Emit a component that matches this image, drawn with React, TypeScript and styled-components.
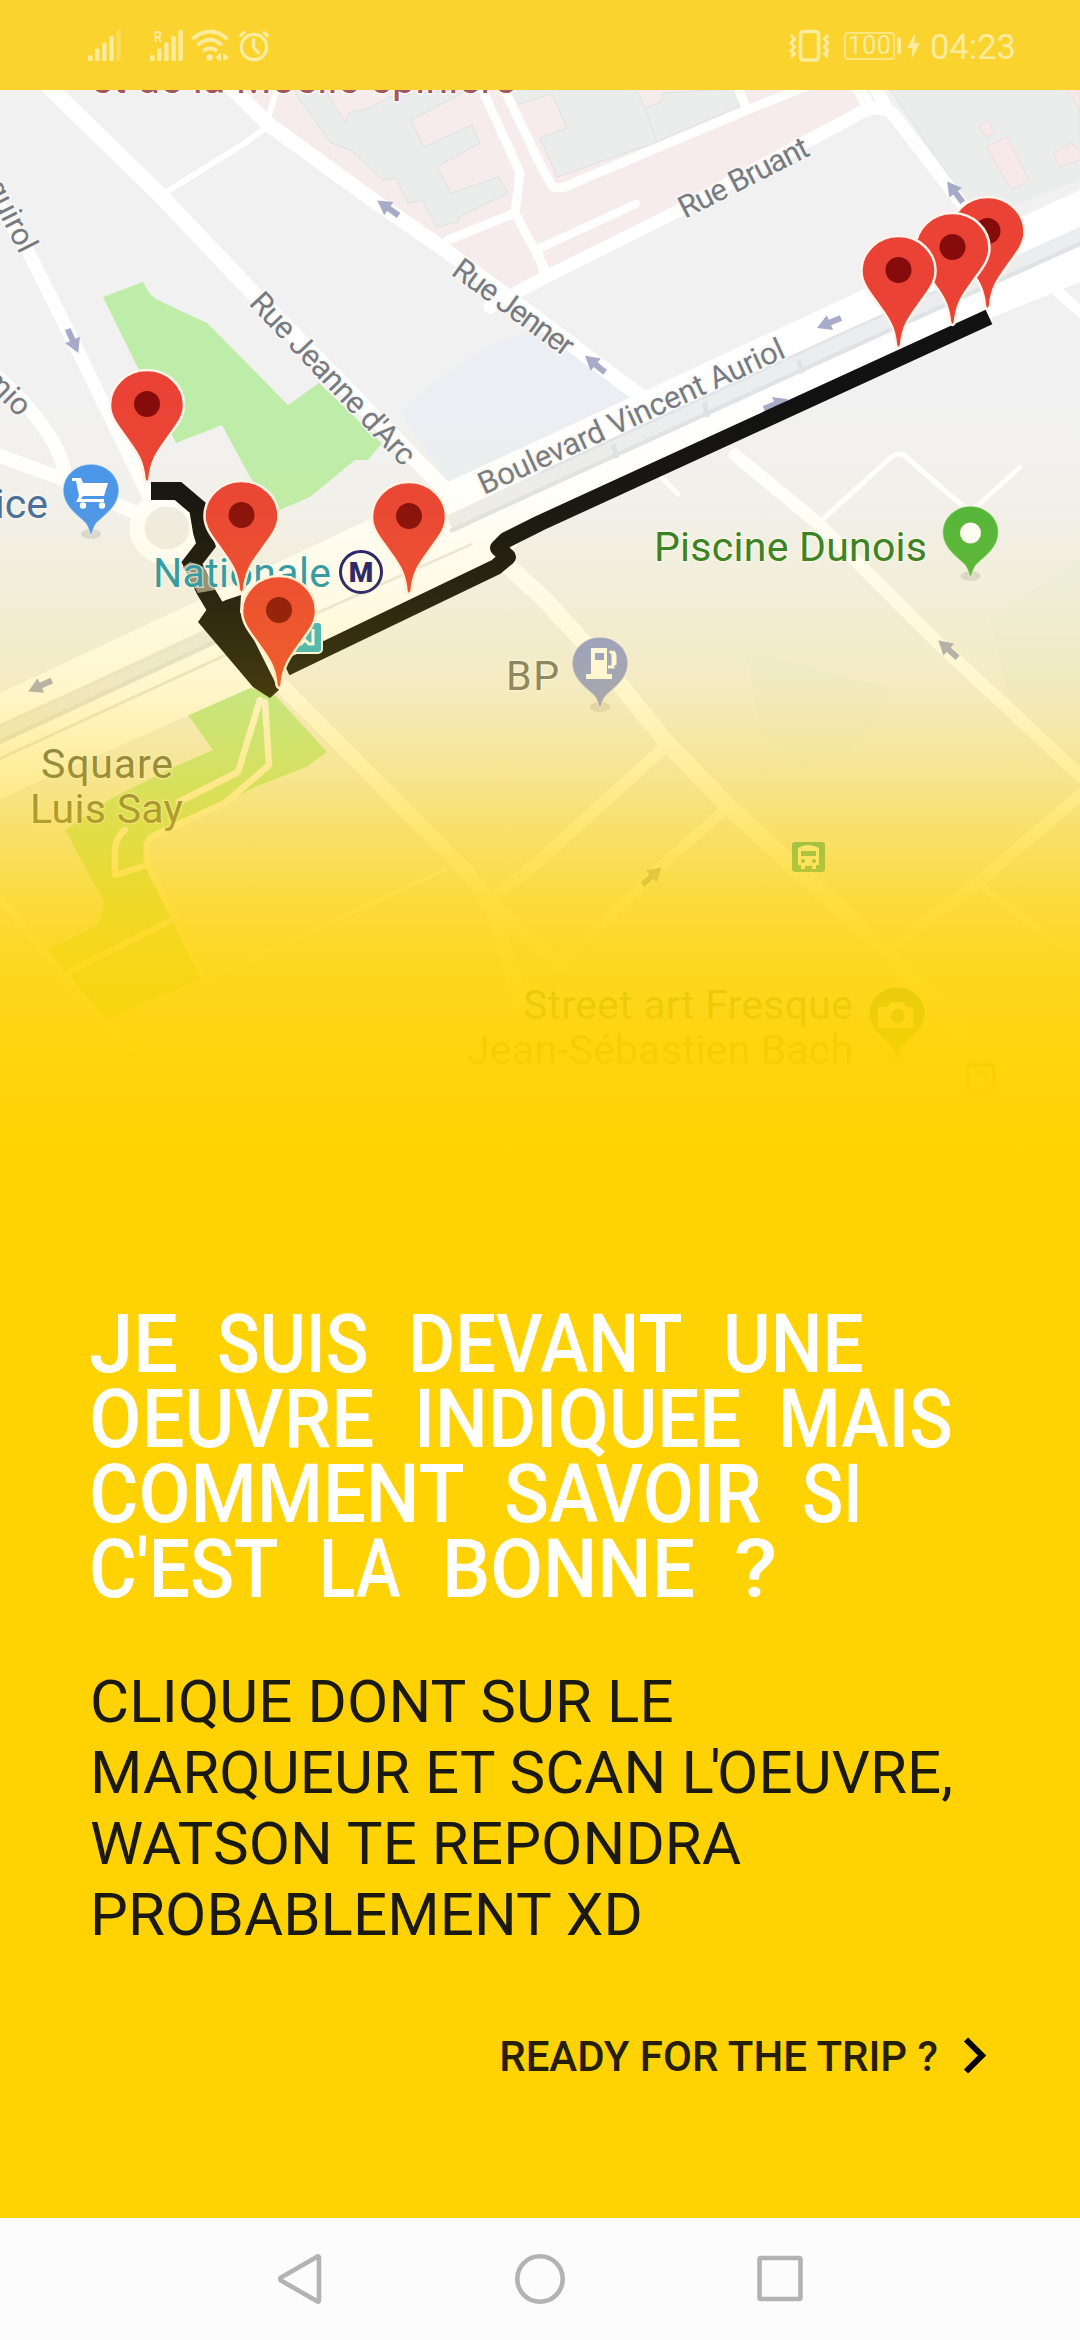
import React from 'react';
import styled, { createGlobalStyle } from 'styled-components';

const GlobalStyle = createGlobalStyle`
  * { box-sizing: border-box; }
  body { margin: 0; background: #ffd303; }
`;

const Page = styled.main`
  width: 1080px;
  height: 2340px;
  display: flex;
  flex-direction: column;
  overflow: hidden;
  background: #ffd303;
  font-family: Roboto, 'Liberation Sans', sans-serif;
`;

const StatusBar = styled.header`
  flex: none;
  height: 90px;
  padding: 1px 66px 0 88px;
  display: flex;
  align-items: center;
  justify-content: space-between;
  background: #fad32f;
  color: #fdeb9e;
`;

const StatusGroup = styled.div`
  display: flex;
  align-items: center;
`;

const StatusIcon = styled.svg<{ $gap?: number }>`
  display: block;
  flex: none;
  margin-right: ${(p) => p.$gap ?? 0}px;
`;

const Battery = styled.div`
  width: 51px;
  height: 28px;
  border: 2px solid #fde680;
  border-radius: 4px;
  display: flex;
  align-items: center;
  justify-content: center;
  font-size: 25px;
  line-height: 24px;
  letter-spacing: 0.4px;
`;

const BatteryNub = styled.div`
  width: 4px;
  height: 17px;
  margin: 0 6px 0 2px;
  border-radius: 2px;
  background: #fdeb9e;
`;

const Clock = styled.span`
  width: 84px;
  padding-top: 2px;
  font-size: 34.5px;
  line-height: 40px;
  white-space: nowrap;
`;

const MapArt = styled.svg`
  flex: none;
  display: block;
  width: 1080px;
  height: 1110px;
  font-family: Roboto, 'Liberation Sans', sans-serif;
`;

const Content = styled.section`
  flex: 1;
  min-height: 0;
  padding: 107px 0 0 89px;
  display: flex;
  flex-direction: column;
`;

const Heading = styled.h1`
  margin: 0;
  font-size: 81px;
  line-height: 75px;
  font-weight: 500;
  color: #fff;
`;

const HeadingLine = styled.span`
  display: flex;
`;

const Word = styled.span<{ $slot: number; $scale: number }>`
  flex: none;
  width: ${(p) => p.$slot}px;
  white-space: nowrap;
  transform: scaleX(${(p) => p.$scale});
  transform-origin: 0 50%;
`;

const Description = styled.p`
  margin: 59px 0 0 1px;
  font-size: 60px;
  line-height: 71px;
  letter-spacing: 0.1px;
  color: #1b1a12;
  white-space: nowrap;
`;

const Elision = styled.span`
  letter-spacing: -3.6px;
`;

const StartButton = styled.button`
  align-self: flex-end;
  margin: 79px 93px 0 0;
  padding: 0;
  height: 56px;
  border: 0;
  background: none;
  display: flex;
  align-items: center;
  gap: 24px;
  font: 500 42px/56px Roboto, 'Liberation Sans', sans-serif;
  color: #261f06;
  white-space: nowrap;
`;

const Chevron = styled.svg`
  display: block;
  margin-bottom: 2px;
`;

const NavBar = styled.nav`
  flex: none;
  height: 122px;
  padding: 0 276px;
  display: flex;
  align-items: center;
  justify-content: space-between;
  background: #fcfcfc;
`;

const NavIcon = styled.svg`
  display: block;
  width: 50px;
  height: 54px;
  overflow: visible;
  fill: none;
  stroke: #b3b3b3;
  stroke-width: 4.6;
  stroke-linejoin: round;
`;

const Roads = styled.g`
  fill: none;
  stroke: #fff;
  stroke-linejoin: round;
  stroke-linecap: round;
`;

const StreetName = styled.text`
  font-size: 31px;
  fill: #777b80;
  stroke: #f7f7f7;
  stroke-width: 3px;
  paint-order: stroke;
`;

const PlaceName = styled.text`
  font-size: 41px;
  stroke: rgba(255, 255, 255, 0.6);
  stroke-width: 3px;
  paint-order: stroke;
`;

type Pt = { x: number; y: number };

const Marker = ({ x, y }: Pt) => (
  <g transform={`translate(${x} ${y})`}>
    <path
      d="M-2.5 75 C-4 55 -12 46 -22 32 C-31 20 -37 12 -37 1 A37 35 0 0 1 37 1 C37 12 31 20 22 32 C12 46 4 55 2.5 75 Q0 81 -2.5 75Z"
      fill="#ea4335"
      stroke="#fff3ea"
      strokeWidth="2.5"
    />
    <circle r="13" fill="#860c0c" />
  </g>
);

const Place = ({ x, y, color, children }: Pt & { color: string; children?: React.ReactNode }) => (
  <g transform={`translate(${x} ${y})`}>
    <ellipse cx="0" cy="43" rx="10" ry="5" fill="#000" opacity=".1" />
    <path
      d="M0 45 C-3 39 -2 34 -9 29 C-18 21 -28 13 -28 -1 A28 26 0 0 1 28 -1 C28 13 18 21 9 29 C2 34 3 39 0 45Z"
      fill={color}
      stroke="#fff"
      strokeOpacity=".5"
      strokeWidth="1.5"
    />
    {children}
  </g>
);

const arrows = [
  [388, 208, 215], [73, 341, 66], [955, 192, 233], [829, 323, 157], [595, 364, 220],
  [776, 404, -22], [948, 649, 222], [40, 686, 155], [652, 876, -42],
];

const markers: Pt[] = [
  { x: 987.5, y: 231 }, { x: 952.5, y: 247 }, { x: 898.5, y: 270 },
  { x: 147, y: 404 }, { x: 241.5, y: 515 }, { x: 409, y: 516 }, { x: 279, y: 610 },
];

const CityMap = () => (
  <MapArt viewBox="0 90 1080 1110">
    <defs>
      <linearGradient id="fade" gradientUnits="userSpaceOnUse" x1="0" y1="400" x2="0" y2="1150">
        <stop offset="0" stopColor="#ffd303" stopOpacity="0" />
        <stop offset=".13" stopColor="#ffd303" stopOpacity=".03" />
        <stop offset=".25" stopColor="#ffd303" stopOpacity=".1" />
        <stop offset=".38" stopColor="#ffd303" stopOpacity=".2" />
        <stop offset=".48" stopColor="#ffd303" stopOpacity=".37" />
        <stop offset=".587" stopColor="#ffd303" stopOpacity=".59" />
        <stop offset=".667" stopColor="#ffd303" stopOpacity=".76" />
        <stop offset=".75" stopColor="#ffd303" stopOpacity=".87" />
        <stop offset=".84" stopColor="#ffd303" stopOpacity=".935" />
        <stop offset=".92" stopColor="#ffd303" stopOpacity=".98" />
        <stop offset="1" stopColor="#ffd303" />
      </linearGradient>
    </defs>
    <rect y="90" width="1080" height="1110" fill="#f1f1f1" />

    {/* hospital grounds and buildings */}
    <path d="M235 90 L450 247 L500 298 L540 272 L862 116 L875 100 L868 90Z" fill="#f7ecec" />
    <g fill="#ebecec" stroke="#dfe0e0" strokeWidth="1">
      <path d="M298 97 L331 143 L351 150 L382 180 L396 178 L408 203 L422 200 L437 227 L458 222 L459 217 L508 193 L499 177 L451 193 L437 167 L480 143 L472 125 L424 147 L411 120 L455 97 L470 88 L389 97 L370 108 L350 112 L345 122 L324 88 L294 88Z" />
      <path d="M567 128 L540 138 L557 177 L654 143 L747 103 L741 88 L664 93 L660 103 L645 108 L636 88 L510 88 L515 105 L552 94Z" />
      <path d="M645 108 L656 140" fill="none" />
      <path d="M889 88 L962 195 L1080 150 L1080 88Z" />
      <path d="M960 195 L970 222 L1080 180 L1080 140Z" stroke="none" />
    </g>
    <g fill="#f7e9e9" stroke="#e9dcdc" strokeWidth="1">
      <path d="M979 127 L988 120 L995 133 L986 137Z" />
      <path d="M986 147 L1007 137 L1029 180 L1012 190Z" />
      <path d="M1053 153 L1071 143 L1082 152 V159 L1060 167Z" />
      <path d="M1067 88 L1080 112 V88Z" />
    </g>
    <path d="M400 413 L430 385 L489 345 L540 330 L640 400 L640 403 L448 482Z" fill="#ebeff4" />
    <path d="M745 650 L895 690 L850 750 L800 765 L760 725Z" fill="#e9f0f0" opacity=".4" />
    <path d="M990 620 L1080 560 V700 H1010Z" fill="#e9f0ec" opacity=".5" />

    {/* parks */}
    <path d="M103 297 L143 282 Q150 298 162 302 L207 323 L224 340 L288 405 L319 383 L382 443 L368 460 L355 460 L310 497 L275 512 L250 477 L222 425 L176 443 L138 368Z" fill="#beedaa" />
    <path d="M250 688 L188 715 L213 750 L172 768 L114 797 L65 830 L105 903 L98 925 L48 950 L107 1020 L203 977 L172 917 L148 865 L143 843 L179 823 L224 803 L255 787 L306 767 L327 752 L275 695Z" fill="#b9eaa0" />

    {/* streets */}
    <Roads>
      <path d="M40 78 L160 195 L253 293 L455 500" strokeWidth="16" />
      <path d="M222 78 L268 124 L370 198 L445 250 L643 398" strokeWidth="15" />
      <path d="M268 126 L245 143 L160 196 M278 85 L268 118" strokeWidth="6" />
      <path d="M-10 190 L30 255 L75 345 L148 495" strokeWidth="13" />
      <path d="M-5 375 C30 405 62 445 65 475 M-5 454 L60 478 L140 515" strokeWidth="14" />
      <ellipse cx="167" cy="528" rx="30" ry="29" strokeWidth="15" fill="#efeee9" />
      <path d="M190 555 L215 600" strokeWidth="14" />
      <path d="M478 80 L520 173 L515 213 L448 240 M515 213 L541 262 L546 272" strokeWidth="9" />
      <path d="M500 80 L543 170 L553 187 L562 188 L747 110 L810 85 M747 110 L737 85" strokeWidth="9" />
      <path d="M490 307 L540 280 L674 213 L860 113 Q880 103 893 114 L965 208 M855 82 L870 108 M874 85 L886 108" strokeWidth="13" />
      <path d="M543 272 L538 249 L636 204" strokeWidth="8" />
      <path d="M478 538 L545 600 L600 660 L667 743 L730 808 L890 955 L960 1030" strokeWidth="17" />
      <path d="M735 455 L820 525 L940 645 L1010 710 L1090 785" strokeWidth="13" />
      <path d="M662 478 L678 494 M820 522 L890 458 Q898 451 905 456 L965 508 M975 508 L1020 467" strokeWidth="5" />
      <path d="M1058 292 L1090 320" strokeWidth="11" />
      <path d="M667 745 L540 860 L485 905 M1090 787 L977 883 L891 947" strokeWidth="12" />
      <path d="M728 807 L660 867 L567 957" strokeWidth="10" />
      <path d="M977 883 L1067 950 M-5 892 L50 960 L130 1050" strokeWidth="7" />
      <path d="M283 687 L465 870 L492 905 L560 965 M492 905 L520 1000" strokeWidth="15" />
      <path d="M444 870 L205 980" strokeWidth="4" />
      <path d="M260 700 L238 772 L179 802 M125 830 Q114 838 115 855 L115 875 L148 865 M265 702 L269 765 L225 803 L155 835 Q143 840 148 865 L175 920 L205 980 M68 973 L175 918" strokeWidth="6.5" stroke="#fcfaf0" />
    </Roads>

    {/* boulevard with the elevated railway along its centre */}
    <path d="M0 693 L193 603 L448 482 L860 291 L1080 190 V282 L988 319 L540 526 L500 560 L250 688 L0 799Z" fill="#fff" />
    <g fill="none" stroke="#ecedef">
      <path d="M-5 737 L240 623 M450 524 L540 482 L830 350 L1090 232" strokeWidth="18" />
      <path d="M-5 744 L240 630 M450 531 L830 357 L1090 239" strokeWidth="4" stroke="#e0e3e6" />
      <path d="M-5 761 L317 613 L472 544 M-5 728 L200 635" strokeWidth="3" stroke="#e9e9e5" />
      <path d="M540 473 L830 339 L990 267" strokeWidth="3" stroke="#e2e5e9" />
      <path d="M613 444 L617 458 M704 402 L708 417 M798 360 L803 373" strokeWidth="5" stroke="#dfe2e6" />
    </g>

    <g fill="#a7abc8">
      {arrows.map(([x, y, r]) => (
        <path key={`${x}-${y}`} transform={`translate(${x} ${y}) rotate(${r})`} d="M-13 -3 H-1 V-8 L13 0 L-1 8 V3 H-13Z" />
      ))}
    </g>

    <StreetName transform="translate(685 219) rotate(-27)" textLength="142">Rue Bruant</StreetName>
    <StreetName transform="translate(450 274) rotate(36)" textLength="142">Rue Jenner</StreetName>
    <StreetName transform="translate(248 304) rotate(46.5)" textLength="225">Rue Jeanne d'Arc</StreetName>
    <StreetName transform="translate(484 495) rotate(-24.5)" textLength="333">Boulevard Vincent Auriol</StreetName>
    <StreetName transform="translate(20 255) rotate(63)" textAnchor="end">Esquirol</StreetName>
    <StreetName transform="translate(19 418) rotate(45)" textAnchor="end">mio</StreetName>

    <PlaceName x="91" y="93" textLength="425" fill="#a3555c">et de la Moelle épinière</PlaceName>

    {/* walking route */}
    <path d="M989 317 L540 523 L506 540 L498 548 L508 557 L496 567 L286 668" fill="none" stroke="#121212" strokeWidth="16" strokeLinejoin="round" />
    <path d="M151 491 H178 L198 508 L202 532 L206 545 L192 563 L205 590 L218 612" fill="none" stroke="#121212" strokeWidth="18" />
    <path d="M198 622 L207 609 L226 600 L241 595 L240 612 L279 690 L270 698 L253 687Z" fill="#121212" />
    <path d="M183 567 L190 562 L204 567 L215 590 L198 593Z" fill="#8d8a80" />

    <PlaceName x="153" y="587" textLength="178" fill="#2397b0">Nationale</PlaceName>
    <circle cx="361" cy="572" r="20.5" fill="#fff" stroke="#1b1a70" strokeWidth="3" />
    <text x="361" y="582" textAnchor="middle" fontSize="28" fontWeight="900" fill="#1b1a70">M</text>
    <rect x="289" y="622" width="33" height="31" rx="4" fill="#35b4ca" stroke="#fff" strokeWidth="2" />
    <path d="M300 645 l5 -5 l4 4 h4 v-15" fill="none" stroke="#fff" strokeWidth="3" />

    <PlaceName x="654" y="561" textLength="273" fill="#2e7d27">Piscine Dunois</PlaceName>
    <PlaceName x="506" y="690" textLength="53" fill="#757578">BP</PlaceName>
    <PlaceName x="48" y="518" textAnchor="end" fill="#466c9f">ice</PlaceName>
    <PlaceName x="41" y="778" textLength="132" fill="#56625f">Square</PlaceName>
    <PlaceName x="30" y="823" textLength="153" fill="#56625f">Luis Say</PlaceName>
    <PlaceName x="523" y="1019" textLength="330" fill="#2f7d34">Street art Fresque</PlaceName>
    <PlaceName x="467" y="1064" textLength="386" fill="#2f7d34">Jean-Sébastien Bach</PlaceName>

    <Place x={91} y={491} color="#4895ee">
      <g fill="#fff">
        <path d="M-19 -13 H-10 L-8 -8 H17 L13 5 H-8 L-10 8 H13 V11 H-15 L-12 5 L-15 -10 H-19Z" />
        <circle cx="-8" cy="14.5" r="3.2" />
        <circle cx="11" cy="14.5" r="3.2" />
      </g>
    </Place>
    <Place x={970.5} y={533} color="#4fb53c">
      <circle r="10.5" fill="#fff" />
    </Place>
    <Place x={600} y={664} color="#8f9bdc">
      <path d="M-9 -16 H7 V10 H12 V15 H-14 V10 H-9Z" fill="#fff" />
      <rect x="-5" y="-11" width="9" height="7" fill="#8f9bdc" />
      <path d="M8 3 H13 V-10 L10 -13 M13 -13 L15 -9 V1" fill="none" stroke="#fff" strokeWidth="3" />
    </Place>
    <Place x={897} y={1014} color="#2c9554">
      <path d="M-19 -7 H-10 L-6 -12 H6 L9 -7 H16 V14 H-19Z" fill="#fff" />
      <circle cx="1" cy="2" r="7" fill="#2c9554" />
    </Place>

    {/* bus stop */}
    <rect x="792" y="842" width="33" height="30" rx="3" fill="#1fa8a8" />
    <path d="M798 848 Q808 842 819 848 V865 H816 V869 H812 V866 H805 V869 H801 V865 H798Z" fill="#fff" />
    <rect x="801" y="851" width="15" height="5" fill="#1fa8a8" />
    <circle cx="803" cy="861" r="2" fill="#1fa8a8" />
    <circle cx="814" cy="861" r="2" fill="#1fa8a8" />
    <rect x="967" y="1065" width="27" height="26" rx="3" fill="none" stroke="#3b9c55" strokeWidth="4" />
    <path d="M975 1073 H986 V1083" fill="none" stroke="#3b9c55" strokeWidth="3" />

    {markers.map((m) => (
      <Marker key={m.x} {...m} />
    ))}
    <rect y="400" width="1080" height="750" fill="url(#fade)" />
    <rect y="1149" width="1080" height="51" fill="#ffd303" />
  </MapArt>
);

const headingLines: [string, number, number][][] = [
  [['JE', 128, 0.98], ['SUIS', 191, 0.87], ['DEVANT', 315, 0.893], ['UNE', 140, 0.9]],
  [['OEUVRE', 325, 0.94], ['INDIQUEE', 364, 0.918], ['MAIS', 175, 0.885]],
  [['COMMENT', 415, 0.935], ['SAVOIR', 298, 0.917], ['SI', 60, 0.84]],
  [["C'EST", 230, 0.9], ['LA', 123, 0.83], ['BONNE', 292, 0.945], ['?', 44, 1.1]],
];

const SignalBars = ({ roaming, gap }: { roaming?: boolean; gap: number }) => (
  <StatusIcon width="34" height="34" viewBox="0 0 34 34" $gap={gap} fill="currentColor">
    {[6, 12.5, 18.5, 25, 31].map((h, i) => (
      <rect key={h} x={i * 7.1} y={32 - h} width="4.4" height={h} rx="1.6" opacity={!roaming && i === 4 ? 0.35 : 1} />
    ))}
    {roaming && (
      <text x="4" y="13" fontSize="15" fontWeight="700" textLength="8" lengthAdjust="spacingAndGlyphs">R</text>
    )}
  </StatusIcon>
);

export default function App() {
  return (
    <Page>
      <GlobalStyle />
      <StatusBar>
        <StatusGroup>
          <SignalBars gap={28} />
          <SignalBars roaming gap={7} />
          <StatusIcon width="38" height="34" viewBox="0 0 38 34" $gap={9} fill="none" stroke="currentColor" strokeWidth="3.8">
            <path d="M1.5 10 Q19 -5 36.5 10 M6.5 16 Q19 5.5 31 16 M12 22 Q19 16.5 26 22" />
            <circle cx="18.5" cy="28.5" r="3.3" fill="currentColor" stroke="none" />
            <path d="M24 28.5 l6 -5 v9z M32 23.5 l6 5 l-6 4z" fill="currentColor" stroke="none" />
          </StatusIcon>
          <StatusIcon width="32" height="34" viewBox="0 0 32 34" fill="none" stroke="currentColor" strokeWidth="3.3" strokeLinecap="round">
            <circle cx="16" cy="18" r="12.7" />
            <path d="M15.5 10.5 V18 L20.5 24 M2.5 6.5 L6 3.5 M29.5 6.5 L26 3.5" />
          </StatusIcon>
        </StatusGroup>
        <StatusGroup>
          <StatusIcon width="40" height="34" viewBox="0 0 40 34" $gap={15} fill="none" stroke="currentColor">
            <rect x="11.5" y="2.5" width="18" height="28.5" rx="3" strokeWidth="3.6" />
            <path d="M2 6 L5.5 10 L2 14 L5.5 18 L2 22 L5.5 25 L2 28 M39 6 L35.5 10 L39 14 L35.5 18 L39 22 L35.5 25 L39 28" strokeWidth="3" />
          </StatusIcon>
          <Battery>100</Battery>
          <BatteryNub />
          <StatusIcon width="13" height="26" viewBox="0 0 13 26" $gap={10} fill="currentColor">
            <path d="M8 0 L0 15 H5.5 L4.5 26 L13 10 H7.5Z" />
          </StatusIcon>
          <Clock>04:23</Clock>
        </StatusGroup>
      </StatusBar>
      <CityMap />
      <Content>
        <Heading>
          {headingLines.map((line, i) => (
            <HeadingLine key={i}>
              {line.map(([word, slot, scale]) => (
                <Word key={word} $slot={slot} $scale={scale}>{word}</Word>
              ))}
            </HeadingLine>
          ))}
        </Heading>
        <Description>
          CLIQUE DONT SUR LE
          <br />
          MARQUEUR ET SCAN <Elision>L'</Elision>OEUVRE,
          <br />
          WATSON TE REPONDRA
          <br />
          PROBABLEMENT XD
        </Description>
        <StartButton>
          READY FOR THE TRIP ?
          <Chevron width="25" height="38" viewBox="0 0 25 38" fill="none" stroke="#000" strokeWidth="6">
            <path d="M4 2.5 L20 18.5 L4 34.5" />
          </Chevron>
        </StartButton>
      </Content>
      <NavBar>
        <NavIcon viewBox="0 0 50 54">
          <path d="M41.5 4.5 Q43 4 43 6 V48 Q43 50 41.5 49.5 L5 28.5 Q3.5 27 5 25.5Z" />
        </NavIcon>
        <NavIcon viewBox="0 0 50 54">
          <circle cx="25" cy="27" r="22.7" />
        </NavIcon>
        <NavIcon viewBox="0 0 50 54">
          <rect x="5.5" y="6" width="41" height="41" rx="1.5" />
        </NavIcon>
      </NavBar>
    </Page>
  );
}
